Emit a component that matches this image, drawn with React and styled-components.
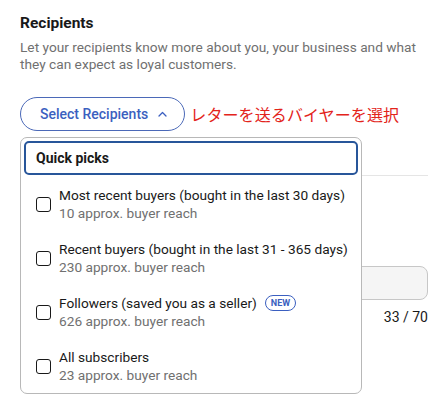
import React from "react";
import styled, { createGlobalStyle } from "styled-components";

const GlobalStyle = createGlobalStyle`
  body {
    margin: 0;
    background: #fff;
    font-family: Roboto, "Noto Sans", sans-serif;
    color: #191919;
  }
`;

const Page = styled.div`
  position: relative;
  width: 445px;
  height: 412px;
  padding: 13px 17px 0 20px;
  box-sizing: border-box;
  overflow: hidden;
`;

const Title = styled.h2`
  margin: 0;
  font-size: 15.5px;
  line-height: 20px;
  font-weight: 700;
  color: #191919;
`;

const Description = styled.p`
  margin: 6px 0 0;
  font-size: 13.7px;
  line-height: 17px;
  color: #707070;
`;

const PickerRow = styled.div`
  display: flex;
  align-items: center;
  gap: 5px;
  margin-top: 24px;
`;

const PickerButton = styled.button`
  display: flex;
  align-items: center;
  gap: 10px;
  height: 34px;
  padding: 0 17px 0 19px;
  border: 1px solid #4b69b8;
  border-radius: 17px;
  background: #fff;
  color: #3b5fc0;
  font-family: inherit;
  font-size: 14px;
  font-weight: 500;
`;

const Note = styled.span`
  font-family: "Noto Sans CJK JP", sans-serif;
  font-size: 16px;
  color: #e3241b;
  letter-spacing: 0.1px;
`;

const Divider = styled.div`
  margin-top: 44px;
  margin-left: 330px;
  height: 1px;
  background: #e5e5e5;
`;

const TextInput = styled.div`
  margin-top: 90px;
  height: 34px;
  border: 1px solid #c7c7c7;
  border-radius: 8px;
  background: #f5f5f5;
  box-sizing: border-box;
`;

const Counter = styled.div`
  margin-top: 9px;
  text-align: right;
  font-size: 14px;
  color: #191919;
`;

const Menu = styled.div`
  position: absolute;
  top: 137px;
  left: 20px;
  width: 342px;
  box-sizing: border-box;
  padding: 3px 3px 0;
  border: 1px solid #b8b8b8;
  border-radius: 7px;
  background: #fff;
`;

const QuickPicks = styled.div`
  display: flex;
  align-items: center;
  height: 34px;
  margin-bottom: 2px;
  padding-left: 10px;
  box-sizing: border-box;
  border: 2px solid #28569a;
  border-radius: 5px;
  font-size: 14px;
  font-weight: 700;
`;

const Option = styled.label`
  display: flex;
  align-items: center;
  gap: 8px;
  height: 54px;
  padding-left: 12px;
`;

const Box = styled.span`
  width: 15px;
  height: 15px;
  flex: none;
  border: 1.5px solid #191919;
  border-radius: 3px;
  box-sizing: border-box;
`;

const OptionText = styled.div`
  display: flex;
  flex-direction: column;
`;

const OptionLabel = styled.span`
  display: flex;
  align-items: center;
  gap: 8px;
  white-space: nowrap;
  font-size: 13.7px;
  line-height: 18px;
  color: #191919;
`;

const Reach = styled.span`
  font-size: 13.7px;
  line-height: 18px;
  color: #707070;
`;

const Badge = styled.span`
  display: inline-flex;
  align-items: center;
  height: 16px;
  padding: 0 5px;
  border: 1px solid #3b5fc0;
  border-radius: 9px;
  font-size: 9px;
  font-weight: 700;
  color: #3b5fc0;
  box-sizing: border-box;
`;

const options = [
  { label: "Most recent buyers (bought in the last 30 days)", reach: "10" },
  { label: "Recent buyers (bought in the last 31 - 365 days)", reach: "230" },
  { label: "Followers (saved you as a seller)", reach: "626", isNew: true },
  { label: "All subscribers", reach: "23" },
];

const ChevronUp = () => (
  <svg width="9" height="6" viewBox="0 0 9 6" fill="none">
    <path d="M1 5l3.5-3.5L8 5" stroke="#3b5fc0" strokeWidth="1.3" strokeLinecap="round" strokeLinejoin="round" />
  </svg>
);

export default function App() {
  return (
    <>
      <GlobalStyle />
      <Page>
        <Title>Recipients</Title>
        <Description>
          Let your recipients know more about you, your business and what
          they can expect as loyal customers.
        </Description>
        <PickerRow>
          <PickerButton>
            Select Recipients
            <ChevronUp />
          </PickerButton>
          <Note>レターを送るバイヤーを選択</Note>
        </PickerRow>
        <Divider />
        <TextInput />
        <Counter>33 / 70</Counter>

        <Menu>
          <QuickPicks>Quick picks</QuickPicks>
          {options.map((o) => (
            <Option key={o.label}>
              <Box />
              <OptionText>
                <OptionLabel>
                  {o.label}
                  {o.isNew && <Badge>NEW</Badge>}
                </OptionLabel>
                <Reach>{o.reach} approx. buyer reach</Reach>
              </OptionText>
            </Option>
          ))}
        </Menu>
      </Page>
    </>
  );
}
